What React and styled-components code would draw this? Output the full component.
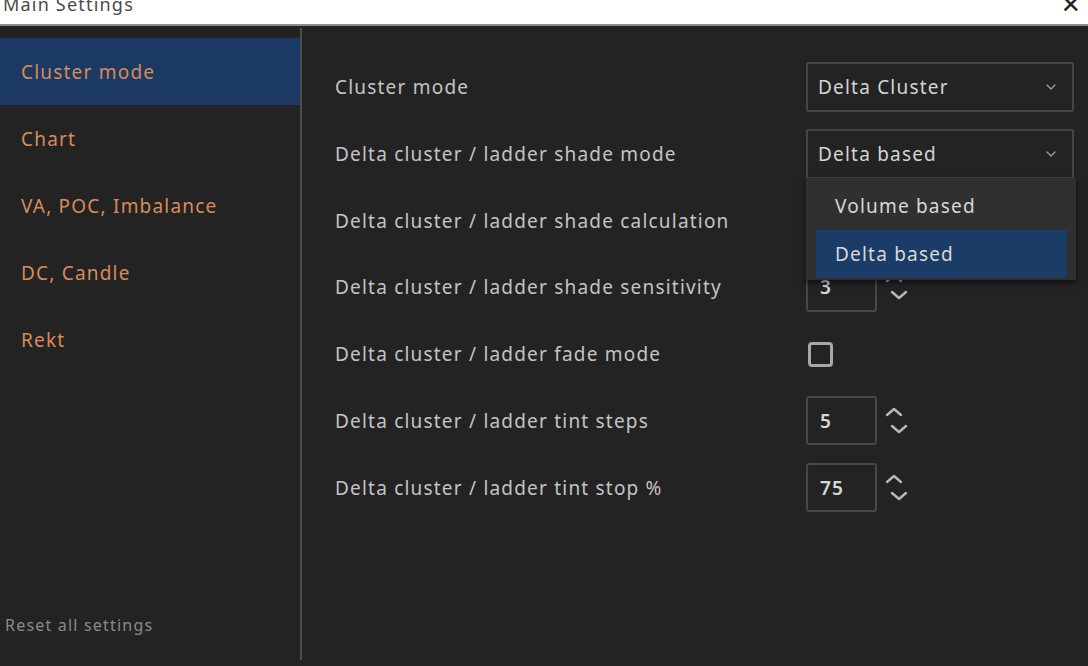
import React from 'react'
import styled, { createGlobalStyle } from 'styled-components'

const Global = createGlobalStyle`
    html, body {
        margin: 0;
        padding: 0;
        background: #232323;
        font-family: "Noto Sans", "DejaVu Sans", sans-serif;
        overflow: hidden;
    }
    * { box-sizing: border-box; }
`

const sections = ['Cluster mode', 'Chart', 'VA, POC, Imbalance', 'DC, Candle', 'Rekt']

const Chevron = ({ size = 10, color = '#9a9a9a' }) => (
    <svg width={size} height={size * 0.6} viewBox="0 0 10 6" fill="none">
        <path d="M1 1l4 4 4-4" stroke={color} strokeWidth="1.4" strokeLinecap="round" strokeLinejoin="round" />
    </svg>
)

const Spinner = () => (
    <svg width="26" height="40" viewBox="0 0 26 40" fill="none">
        <path d="M4 14l7-6 7 6" stroke="#b8b8b8" strokeWidth="2.4" strokeLinecap="round" strokeLinejoin="round" />
        <path d="M9 25l7 6 7-6" stroke="#b8b8b8" strokeWidth="2.4" strokeLinecap="round" strokeLinejoin="round" />
    </svg>
)

const App = () => {
    return (
        <>
            <Global />
            <Window>
                <TitleBar>
                    <span>Main Settings</span>
                    <Close>✕</Close>
                </TitleBar>
                <Body>
                    <Sidebar>
                        {sections.map((s, i) => (
                            <NavItem key={s} active={i === 0}>{s}</NavItem>
                        ))}
                        <Reset>Reset all settings</Reset>
                    </Sidebar>
                    <Content>
                        <Row>
                            <Label>Cluster mode</Label>
                            <Select>
                                <span>Delta Cluster</span>
                                <Chevron />
                            </Select>
                        </Row>
                        <Row>
                            <Label>Delta cluster / ladder shade mode</Label>
                            <Anchor>
                                <Select>
                                    <span>Delta based</span>
                                    <Chevron />
                                </Select>
                                <Menu>
                                    <MenuItem>Volume based</MenuItem>
                                    <MenuItem selected>Delta based</MenuItem>
                                </Menu>
                            </Anchor>
                        </Row>
                        <Row>
                            <Label>Delta cluster / ladder shade calculation</Label>
                            <div />
                        </Row>
                        <Row>
                            <Label>Delta cluster / ladder shade sensitivity</Label>
                            <NumberField>
                                <NumInput>3</NumInput>
                                <Spinner />
                            </NumberField>
                        </Row>
                        <Row>
                            <Label>Delta cluster / ladder fade mode</Label>
                            <Checkbox />
                        </Row>
                        <Row>
                            <Label>Delta cluster / ladder tint steps</Label>
                            <NumberField>
                                <NumInput>5</NumInput>
                                <Spinner />
                            </NumberField>
                        </Row>
                        <Row>
                            <Label>Delta cluster / ladder tint stop %</Label>
                            <NumberField>
                                <NumInput>75</NumInput>
                                <Spinner />
                            </NumberField>
                        </Row>
                    </Content>
                </Body>
            </Window>
        </>
    )
}
export default App

const Window = styled.div`
    display: flex;
    flex-direction: column;
    width: 1088px;
    height: 666px;
    background: #232323;
    letter-spacing: 1.2px;
`
const TitleBar = styled.div`
    height: 26px;
    flex-shrink: 0;
    background: #ffffff;
    border-bottom: 2px solid #8c8c8c;
    display: flex;
    justify-content: space-between;
    align-items: flex-start;
    padding: 0 6px 0 3px;
    overflow: hidden;
    span{
        font-size: 18px;
        line-height: 18px;
        margin-top: -5px;
        color: #4a4a4a;
    }
`
const Close = styled.div`
    font-size: 24px;
    line-height: 24px;
    margin-top: -8px;
    color: #222;
`
const Body = styled.div`
    flex: 1;
    display: flex;
    padding: 2px 0 6px;
`
const Sidebar = styled.div`
    width: 302px;
    flex-shrink: 0;
    border-right: 2px solid #4e4e4e;
    display: flex;
    flex-direction: column;
    padding-top: 10px;
`
const NavItem = styled.div`
    height: 67px;
    display: flex;
    align-items: center;
    padding-left: 21px;
    font-size: 19px;
    color: #d88b5a;
    background: ${p => (p.active ? '#1b3962' : 'transparent')};
`
const Reset = styled.div`
    margin-top: auto;
    padding: 0 0 24px 5px;
    font-size: 16px;
    color: #8a8a8a;
`
const Content = styled.div`
    flex: 1;
    display: flex;
    flex-direction: column;
    gap: 16.8px;
    padding: 34px 14px 0 33px;
`
const Row = styled.div`
    display: grid;
    grid-template-columns: 471px 1fr;
    align-items: center;
    height: 50px;
`
const Label = styled.div`
    font-size: 19px;
    color: #c4c4c4;
    white-space: nowrap;
`
const Anchor = styled.div`
    position: relative;
`
const Select = styled.div`
    height: 50px;
    border: 2px solid #454545;
    border-radius: 2px;
    display: flex;
    align-items: center;
    justify-content: space-between;
    padding: 0 16px 0 10px;
    font-size: 19px;
    color: #d4d4d4;
`
const Menu = styled.div`
    position: absolute;
    top: 49px;
    left: 0;
    width: 270px;
    background: #303030;
    padding: 4px 9px 2px 10px;
    box-shadow: 0 3px 6px rgba(0, 0, 0, 0.6);
    z-index: 2;
`
const MenuItem = styled.div`
    height: 48px;
    display: flex;
    align-items: center;
    padding-left: 19px;
    font-size: 19px;
    color: #d8d8d8;
    background: ${p => (p.selected ? '#1b3c66' : 'transparent')};
`
const NumberField = styled.div`
    display: flex;
    align-items: center;
    gap: 6px;
`
const NumInput = styled.div`
    width: 71px;
    height: 49px;
    border: 2px solid #474747;
    border-radius: 3px;
    display: flex;
    align-items: center;
    padding-left: 12px;
    font-size: 19px;
    font-weight: 600;
    color: #d8d8d8;
`
const Checkbox = styled.div`
    width: 25px;
    height: 25px;
    margin-left: 2px;
    border: 3px solid #a8a8a8;
    border-radius: 4px;
`
